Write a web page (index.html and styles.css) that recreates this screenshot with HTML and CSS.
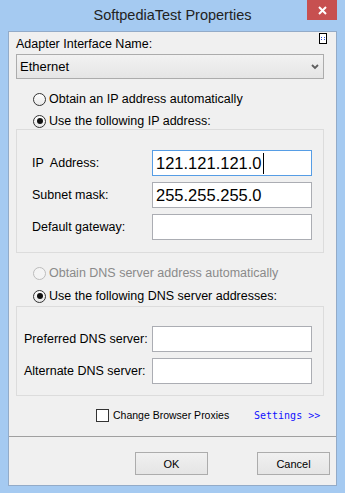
FILE: index.html
```html
<!DOCTYPE html>
<html>
<head>
<meta charset="utf-8">
<link rel="stylesheet" href="styles.css">
</head>
<body>
<div class="window">
  <div class="titlebar">
    <span class="title">SoftpediaTest Properties</span>
    <div class="close">
      <svg width="9" height="9" viewBox="0 0 9 9"><path d="M1 1 L8 8 M8 1 L1 8" stroke="#fff" stroke-width="2" fill="none"/></svg>
    </div>
  </div>
  <div class="client">
    <div class="main">
      <div class="header">
        <span class="lbl">Adapter Interface Name:</span>
        <svg class="grip" width="8" height="11" viewBox="0 0 8 11">
          <rect x="0.5" y="0.5" width="7" height="10" fill="#fff" stroke="#000"/>
          <rect x="2" y="4" width="1" height="1" fill="#2a4fd8"/>
          <rect x="5" y="4" width="1" height="1" fill="#2a4fd8"/>
          <rect x="2" y="6" width="1" height="1" fill="#2a4fd8"/>
          <rect x="5" y="6" width="1" height="1" fill="#2a4fd8"/>
        </svg>
      </div>
      <div class="select">
        <span>Ethernet</span>
        <svg width="8" height="6" viewBox="0 0 8 6"><path d="M1 1 L4 4 L7 1" stroke="#5e5e5e" stroke-width="1.8" fill="none"/></svg>
      </div>
      <div class="radio-row r1"><span class="radio"></span><span>Obtain an IP address automatically</span></div>
      <div class="radio-row r2"><span class="radio checked"></span><span>Use the following IP address:</span></div>
      <div class="group g1">
        <span class="lbl pre">IP  Address:</span>
        <div class="input focus"><span class="val">121.121.121.0</span><span class="caret"></span></div>
        <span class="lbl">Subnet mask:</span>
        <div class="input"><span class="val">255.255.255.0</span></div>
        <span class="lbl">Default gateway:</span>
        <div class="input"></div>
      </div>
      <div class="radio-row r3 disabled"><span class="radio"></span><span>Obtain DNS server address automatically</span></div>
      <div class="radio-row r4"><span class="radio checked"></span><span>Use the following DNS server addresses:</span></div>
      <div class="group g2">
        <span class="lbl">Preferred DNS server:</span>
        <div class="input"></div>
        <span class="lbl">Alternate DNS server:</span>
        <div class="input"></div>
      </div>
      <div class="check-row">
        <div class="check"><span class="box"></span><span>Change Browser Proxies</span></div>
        <span class="settings">Settings &gt;&gt;</span>
      </div>
    </div>
    <div class="footer">
      <div class="btn">OK</div>
      <div class="btn">Cancel</div>
    </div>
  </div>
</div>
</body>
</html>
```

FILE: styles.css
```css
* { box-sizing: border-box; }
html, body { margin: 0; padding: 0; }
body {
  width: 345px;
  height: 493px;
  overflow: hidden;
  font-family: "Liberation Sans", Arial, sans-serif;
  font-size: 12.5px;
  color: #000;
}
.window {
  width: 345px;
  height: 493px;
  background: #a5caf1;
  display: flex;
  flex-direction: column;
}
.titlebar {
  height: 31px;
  display: grid;
  grid-template-columns: 38px 1fr 38px;
}
.title {
  grid-column: 2;
  text-align: center;
  font-size: 14.5px;
  line-height: 31px;
  color: #222;
}
.close {
  grid-column: 3;
  width: 30px;
  height: 20px;
  background: #c75050;
  display: flex;
  align-items: center;
  justify-content: center;
}
.client {
  margin: 0 8px;
  height: 455px;
  border: 1px solid #93abc8;
  background: #f0f0f0;
  display: flex;
  flex-direction: column;
}
.main {
  height: 404px;
  padding: 0 12px 0 7px;
  display: flex;
  flex-direction: column;
}
.header {
  height: 20px;
  padding-top: 4px;
  display: flex;
  justify-content: space-between;
  align-items: flex-start;
}
.lbl { line-height: 16px; white-space: nowrap; }
.pre { white-space: pre; }
.grip { margin-top: -3px; margin-right: -3px; }
.select {
  margin-top: 2px;
  height: 25px;
  border: 1px solid #acacac;
  background: linear-gradient(#f2f2f2, #e5e5e5);
  display: flex;
  align-items: center;
  justify-content: space-between;
  padding: 0 4px 0 3px;
  font-size: 13px;
}
.radio-row {
  height: 18px;
  display: flex;
  align-items: center;
  gap: 3px;
  padding-left: 17px;
}
.r1 { margin-top: 11px; }
.r2 { margin-top: 4px; }
.r3 { margin-top: 11px; }
.r4 { margin-top: 5px; }
.radio {
  width: 13px;
  height: 13px;
  border-radius: 50%;
  border: 1px solid #333;
  background: linear-gradient(#fff, #e8e8e8);
  display: flex;
  align-items: center;
  justify-content: center;
  flex: none;
}
.radio.checked::after {
  content: "";
  width: 6px;
  height: 6px;
  border-radius: 50%;
  background: #111;
}
.disabled { color: #8a8a8a; }
.disabled .radio { border-color: #bcbcbc; background: #f4f4f4; }
.group {
  border: 1px solid #dcdcdc;
  display: grid;
  row-gap: 6px;
  align-items: center;
}
.g1 {
  margin-top: -1px;
  padding: 20px 0 12px 15px;
  grid-template-columns: 120px 160px;
}
.g2 {
  margin-top: 1px;
  padding: 19px 0 11px 7px;
  grid-template-columns: 128px 160px;
}
.input {
  height: 26px;
  border: 1px solid #abadb3;
  background: #fff;
  display: flex;
  align-items: center;
  padding-left: 3px;
}
.input.focus { border-color: #569de5; }
.val {
  font-family: "Liberation Sans", Arial, sans-serif;
  font-size: 16.5px;
  line-height: 22px;
}
.caret {
  width: 1px;
  height: 21px;
  background: #000;
  margin-left: 1px;
}
.check-row {
  margin-top: 10px;
  height: 18px;
  padding-left: 80px;
  display: grid;
  grid-template-columns: 158px auto;
  align-items: center;
}
.check {
  display: flex;
  align-items: center;
  gap: 4px;
  font-size: 10.5px;
}
.box {
  width: 13px;
  height: 13px;
  border: 1px solid #333;
  background: #fff;
  flex: none;
}
.settings {
  font-family: "DejaVu Sans Mono", "Liberation Mono", monospace;
  font-size: 10px;
  color: #1010ff;
}
.footer {
  flex: 1;
  border-top: 1px solid #a0a0a0;
  display: flex;
  justify-content: flex-end;
  align-items: flex-start;
  gap: 49px;
  padding: 15px 6px 0 0;
}
.btn {
  width: 73px;
  height: 23px;
  border: 1px solid #acacac;
  background: linear-gradient(#f0f0f0, #e5e5e5);
  display: flex;
  align-items: center;
  justify-content: center;
  font-size: 11px;
}
```
